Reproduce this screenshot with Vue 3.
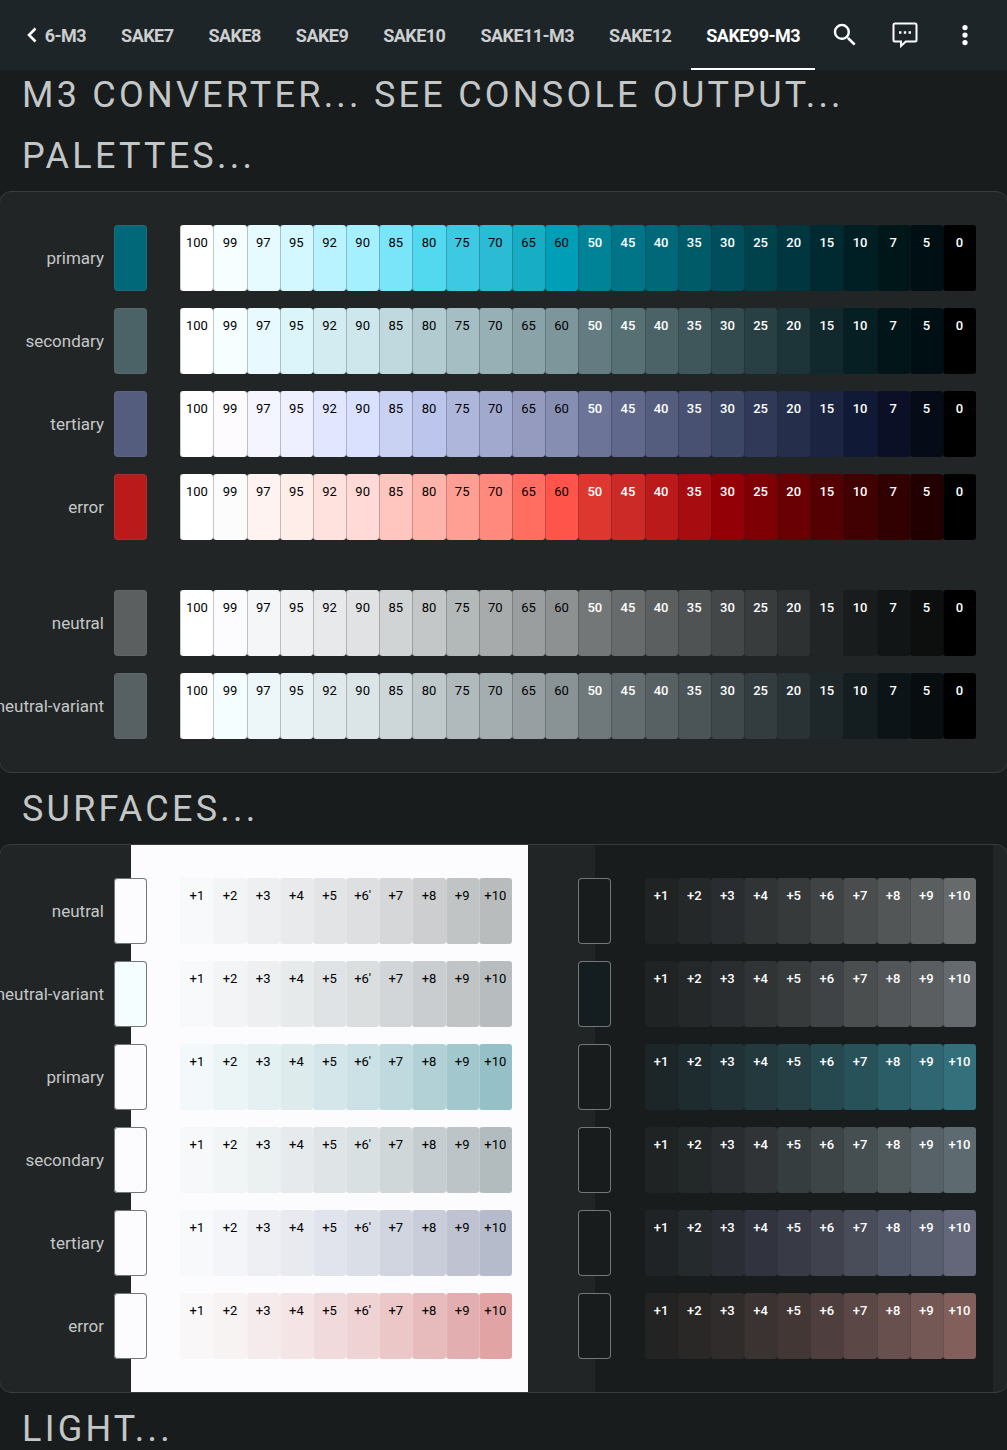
<script setup>
const tabs = ['SAKE7', 'SAKE8', 'SAKE9', 'SAKE10', 'SAKE11-M3', 'SAKE12', 'SAKE99-M3']
const activeTab = 'SAKE99-M3'

const tones = [100, 99, 97, 95, 92, 90, 85, 80, 75, 70, 65, 60, 50, 45, 40, 35, 30, 25, 20, 15, 10, 7, 5, 0]

const hex = (list) => list.split(' ').map((value) => '#' + value)

const palettes = [
  { name: 'primary', base: '#006878', colors: hex('ffffff f6feff e5fbff d3f8ff b8f3ff a5f0ff 7ae4f9 52d8ef 3dc9e1 2bbbd4 17adc5 009fb7 008397 007587 006878 005b69 004e5b 00424c 00363f 002a31 001f25 001719 000f13 000000') },
  { name: 'secondary', base: '#4b6267', colors: hex('ffffff f6feff e8faff dbf5fb d3ecf2 cde7ed bfd9de b2cbd1 a4bec4 97b0b6 8aa3a8 7d969b 647c81 577074 4b6267 3f565b 334a4f 283f43 1d3438 11292d 051f23 021518 000f13 000000') },
  { name: 'tertiary', base: '#545d7e', colors: hex('ffffff fefbff f5f5ff eeefff e2e6ff dae1ff cad2f4 bcc5eb afb6dc a1a9ce 949bbf 868eb2 6c7598 60688b 545d7e 485172 3c4665 303a58 252f4c 1b2542 101a37 0c1026 050c18 000000') },
  { name: 'error', base: '#ba1a1a', colors: hex('ffffff fcfcfc fef3f0 ffedea ffe2de ffdad6 ffc6bf ffb4ab ff9f93 ff897d ff6e61 ff5449 de3730 cb2a26 ba1a1a a60c10 930006 7e0005 690003 540002 410001 310001 220001 000000') },
  { name: 'neutral', base: '#5b5f60', spaced: true, colors: hex('ffffff fcfcff f5f6f8 eff0f2 e8e9eb e1e2e4 d0d4d5 c4c7c8 b3b8b9 a8abac 9a9e9f 8e9192 747778 686b6c 5b5f60 4f5354 444748 383c3d 2d3132 222526 191c1d 111516 0c0f0e 000000') },
  { name: 'neutral-variant', base: '#576063', colors: hex('ffffff f5feff edf6f9 e8f1f4 e0e9ec dbe4e6 cdd6d9 bfc8ca b0babd a4adaf 979fa2 899294 6f797b 636c6f 576063 4b5457 3f484b 333c3f 293235 1e2729 141d1f 0c1417 080d0f 000000') },
]

const lightSteps = ['+1', '+2', '+3', '+4', '+5', "+6'", '+7', '+8', '+9', '+10']
const darkSteps = ['+1', '+2', '+3', '+4', '+5', '+6', '+7', '+8', '+9', '+10']

const surfaces = [
  { name: 'neutral', lightBase: '#fcfcff', darkBase: '#191c1d',
    light: hex('f8f9fb f3f4f6 eeeff0 e8eaeb e3e4e6 dedfe1 d6d7d8 cdced0 c1c4c5 b9bcbd'),
    dark: hex('202324 252829 2a2d2f 313435 373a3b 404344 4a4d4e 535657 5b5e5f 666a6b') },
  { name: 'neutral-variant', lightBase: '#f5feff', darkBase: '#141d1f',
    light: hex('f8f9fb f3f4f6 eeeff1 e7eaeb e0e3e6 dadedf d2d6d9 cacdd0 c0c4c5 b7bcbe'),
    dark: hex('202324 252829 2a2d2f 313435 383b3c 404345 4a4e4e 525659 5a5e61 646a6d') },
  { name: 'primary', lightBase: '#fcfcff', darkBase: '#191c1d',
    light: hex('f3f9fa ecf5f6 e5f0f3 ddebec d4e6ea cbe1e6 bfd9de b1d1d6 a2c8ce 95c0c7'),
    dark: hex('1c2528 1e2b2f 203236 23393e 253f44 25494f 28525a 2b5d67 2f6671 34707b') },
  { name: 'secondary', lightBase: '#fcfcff', darkBase: '#191c1d',
    light: hex('f7f8fa f1f5f6 ebf0f0 e7eaed dfe4e6 d9e0e1 cfd7d8 c6cdd1 bcc4c8 b2bcbe'),
    dark: hex('202324 232828 292d30 303436 363d3f 3e4547 454e51 4f585b 566267 5d6b70') },
  { name: 'tertiary', lightBase: '#fcfcff', darkBase: '#191c1d',
    light: hex('f8f9fb f3f5f9 eeeff3 e8eaef e1e4ed dadee6 d1d5df c9cdd9 bfc3d1 b5bbcb'),
    dark: hex('202326 252a2d 2a2d34 31343f 383b46 40434e 494c59 515666 595e6f 636779') },
  { name: 'error', lightBase: '#fcfcff', darkBase: '#191c1d',
    light: hex('f9f7f8 f8f3f3 f6ebec f4e4e5 f1dadc eed2d4 ebc7c8 e7bbbc e3aeaf e2a3a4'),
    dark: hex('232323 292827 312c2c 3b3232 433736 4e3e3e 5a4746 67504d 745855 825f5b') },
]
</script>

<template>
  <div class="app">
    <header class="bar">
      <button class="scroll-back" type="button" aria-label="Previous tabs">
        <svg width="12" height="16" viewBox="0 0 12 16"><path d="M9.500 1.500 3 8l6.500 6.500" fill="none" stroke="#fff" stroke-width="2.600" /></svg>
      </button>
      <nav class="tabs">
        <a class="tab cut" href="#">6-M3</a>
        <a v-for="tab in tabs" :key="tab" class="tab" :class="{ active: tab === activeTab }" href="#">{{ tab }}</a>
      </nav>
      <div class="actions">
        <button type="button" aria-label="Search">
          <svg width="30" height="30" viewBox="0 0 24 24" fill="#fff"><path d="M15.500 14h-.790l-.280-.270A6.471 6.471 0 0 0 16 9.500 6.500 6.500 0 1 0 9.500 16c1.610 0 3.090-.590 4.230-1.570l.270.280v.790l5 4.990L20.490 19l-4.990-5zm-6 0C7.010 14 5 11.990 5 9.500S7.010 5 9.500 5 14 7.010 14 9.500 11.990 14 9.500 14z" /></svg>
        </button>
        <button type="button" aria-label="Comments">
          <svg width="28" height="28" viewBox="0 0 28 28" fill="none" stroke="#fff" stroke-width="2"><path d="M4 2.500h20a1.500 1.500 0 0 1 1.500 1.500v15a1.500 1.500 0 0 1-1.500 1.500H14.800L10 25v-4.500H4A1.500 1.500 0 0 1 2.500 19V4A1.500 1.500 0 0 1 4 2.500z" /><path d="M8 11.500h2.400M12.800 11.500h2.400M17.600 11.500H20" stroke-width="2.400" /></svg>
        </button>
        <button type="button" aria-label="More">
          <svg width="30" height="30" viewBox="0 0 24 24" fill="#fff"><circle cx="12" cy="6" r="2.100" /><circle cx="12" cy="12" r="2.100" /><circle cx="12" cy="18" r="2.100" /></svg>
        </button>
      </div>
    </header>

    <main class="content">
      <h2>M3 CONVERTER... SEE CONSOLE OUTPUT...</h2>
      <h2>PALETTES...</h2>
      <section class="card">
        <div v-for="row in palettes" :key="row.name" class="row" :class="{ spaced: row.spaced }">
          <span class="label">{{ row.name }}</span>
          <span class="swatch" :style="{ background: row.base }"></span>
          <span class="gap"></span>
          <span v-for="(color, i) in row.colors" :key="i" class="cell" :class="{ inverse: tones[i] <= 50 }" :style="{ background: color }">{{ tones[i] }}</span>
        </div>
      </section>

      <h2>SURFACES...</h2>
      <section class="card split">
        <div v-for="row in surfaces" :key="row.name" class="row">
          <span class="label">{{ row.name }}</span>
          <span class="swatch outlined" :style="{ background: row.lightBase }"></span>
          <span class="gap"></span>
          <span v-for="(color, i) in row.light" :key="'l' + i" class="cell on-light" :style="{ background: color }">{{ lightSteps[i] }}</span>
          <span class="gap wide"></span>
          <span class="swatch outlined" :style="{ background: row.darkBase }"></span>
          <span class="gap"></span>
          <span v-for="(color, i) in row.dark" :key="'d' + i" class="cell inverse" :style="{ background: color }">{{ darkSteps[i] }}</span>
        </div>
      </section>

      <h2>LIGHT...</h2>
    </main>
  </div>
</template>

<style>
body {
  margin: 0;
  background: #191c1d;
}
</style>

<style scoped>
.app {
  display: flex;
  flex-direction: column;
  height: 100vh;
  overflow: hidden;
  background: #191c1d;
  color: #c4c7c7;
  font-family: Roboto, "Liberation Sans", sans-serif;
}

.bar {
  display: flex;
  flex: none;
  height: 70px;
  background: #1e2528;
}

button {
  display: flex;
  align-items: center;
  justify-content: center;
  padding: 0;
  border: 0;
  background: none;
}

.scroll-back {
  flex: none;
  width: 20px;
  margin-left: 22px;
}

.tabs {
  display: flex;
  flex: 1;
  gap: 5px;
  min-width: 0;
  justify-content: flex-end;
}

.tab {
  display: flex;
  align-items: center;
  padding: 3px 15px 0;
  border-bottom: 2px solid transparent;
  color: #cccecf;
  font-size: 18px;
  font-weight: 700;
  letter-spacing: -0.03em;
  text-decoration: none;
  white-space: nowrap;
}

.tab.cut {
  padding-left: 0;
}

.tab.active {
  border-color: #fff;
  color: #fff;
}

.actions {
  display: flex;
  margin-right: 12px;
}

.actions button {
  width: 60px;
}

.content {
  flex: 1;
  min-height: 0;
  overflow: hidden auto;
  scrollbar-width: none;
}

h2 {
  margin: 11px 22px 10px;
  font-size: 36px;
  font-weight: 400;
  line-height: 50px;
  letter-spacing: 0.09em;
}

h2:first-child {
  margin-top: 0;
}

.card {
  display: flex;
  flex-direction: column;
  gap: 17px;
  margin: 0 -1px;
  padding: 33px 31px 33px 0;
  border: 1px solid #393c3d;
  border-radius: 12px;
  background: #222526;
}

.split {
  --unit: calc((100% - 145px) / 26);
  --light-start: calc(114px + var(--unit) * 0.5);
  --light-end: calc(114px + var(--unit) * 12.5);
  --dark-start: calc(114px + var(--unit) * 14.5);
  --dark-end: calc(114px + var(--unit) * 26.5);
  background: linear-gradient(
    90deg,
    #222526 var(--light-start),
    #fcfcff var(--light-start) var(--light-end),
    #222526 var(--light-end) var(--dark-start),
    #191c1d var(--dark-start) var(--dark-end),
    #222526 var(--dark-end)
  );
}

.row {
  display: flex;
  height: 66px;
}

.row.spaced {
  margin-top: 33px;
}

.label {
  display: flex;
  flex: none;
  box-sizing: border-box;
  align-items: center;
  justify-content: flex-end;
  width: 114px;
  padding-right: 10px;
  font-size: 17px;
  white-space: nowrap;
}

.swatch,
.gap,
.cell {
  box-sizing: border-box;
  flex: 1 1 0;
  min-width: 0;
}

.gap.wide {
  flex-grow: 2;
}

.swatch {
  border-radius: 4px;
  box-shadow: inset 0 0 0 1px rgb(116 119 120 / 25%);
}

.swatch.outlined {
  box-shadow: inset 0 0 0 1px #747778;
}

.cell {
  padding-top: 9px;
  border-radius: 3px;
  box-shadow: inset 1px 0 rgb(34 37 38 / 25%);
  color: #000;
  font-size: 13px;
  line-height: 18px;
  text-align: center;
}

.cell.on-light {
  box-shadow: inset 1px 0 rgb(252 252 255 / 25%);
}

.cell.inverse {
  color: #fff;
  font-weight: 500;
}
</style>
